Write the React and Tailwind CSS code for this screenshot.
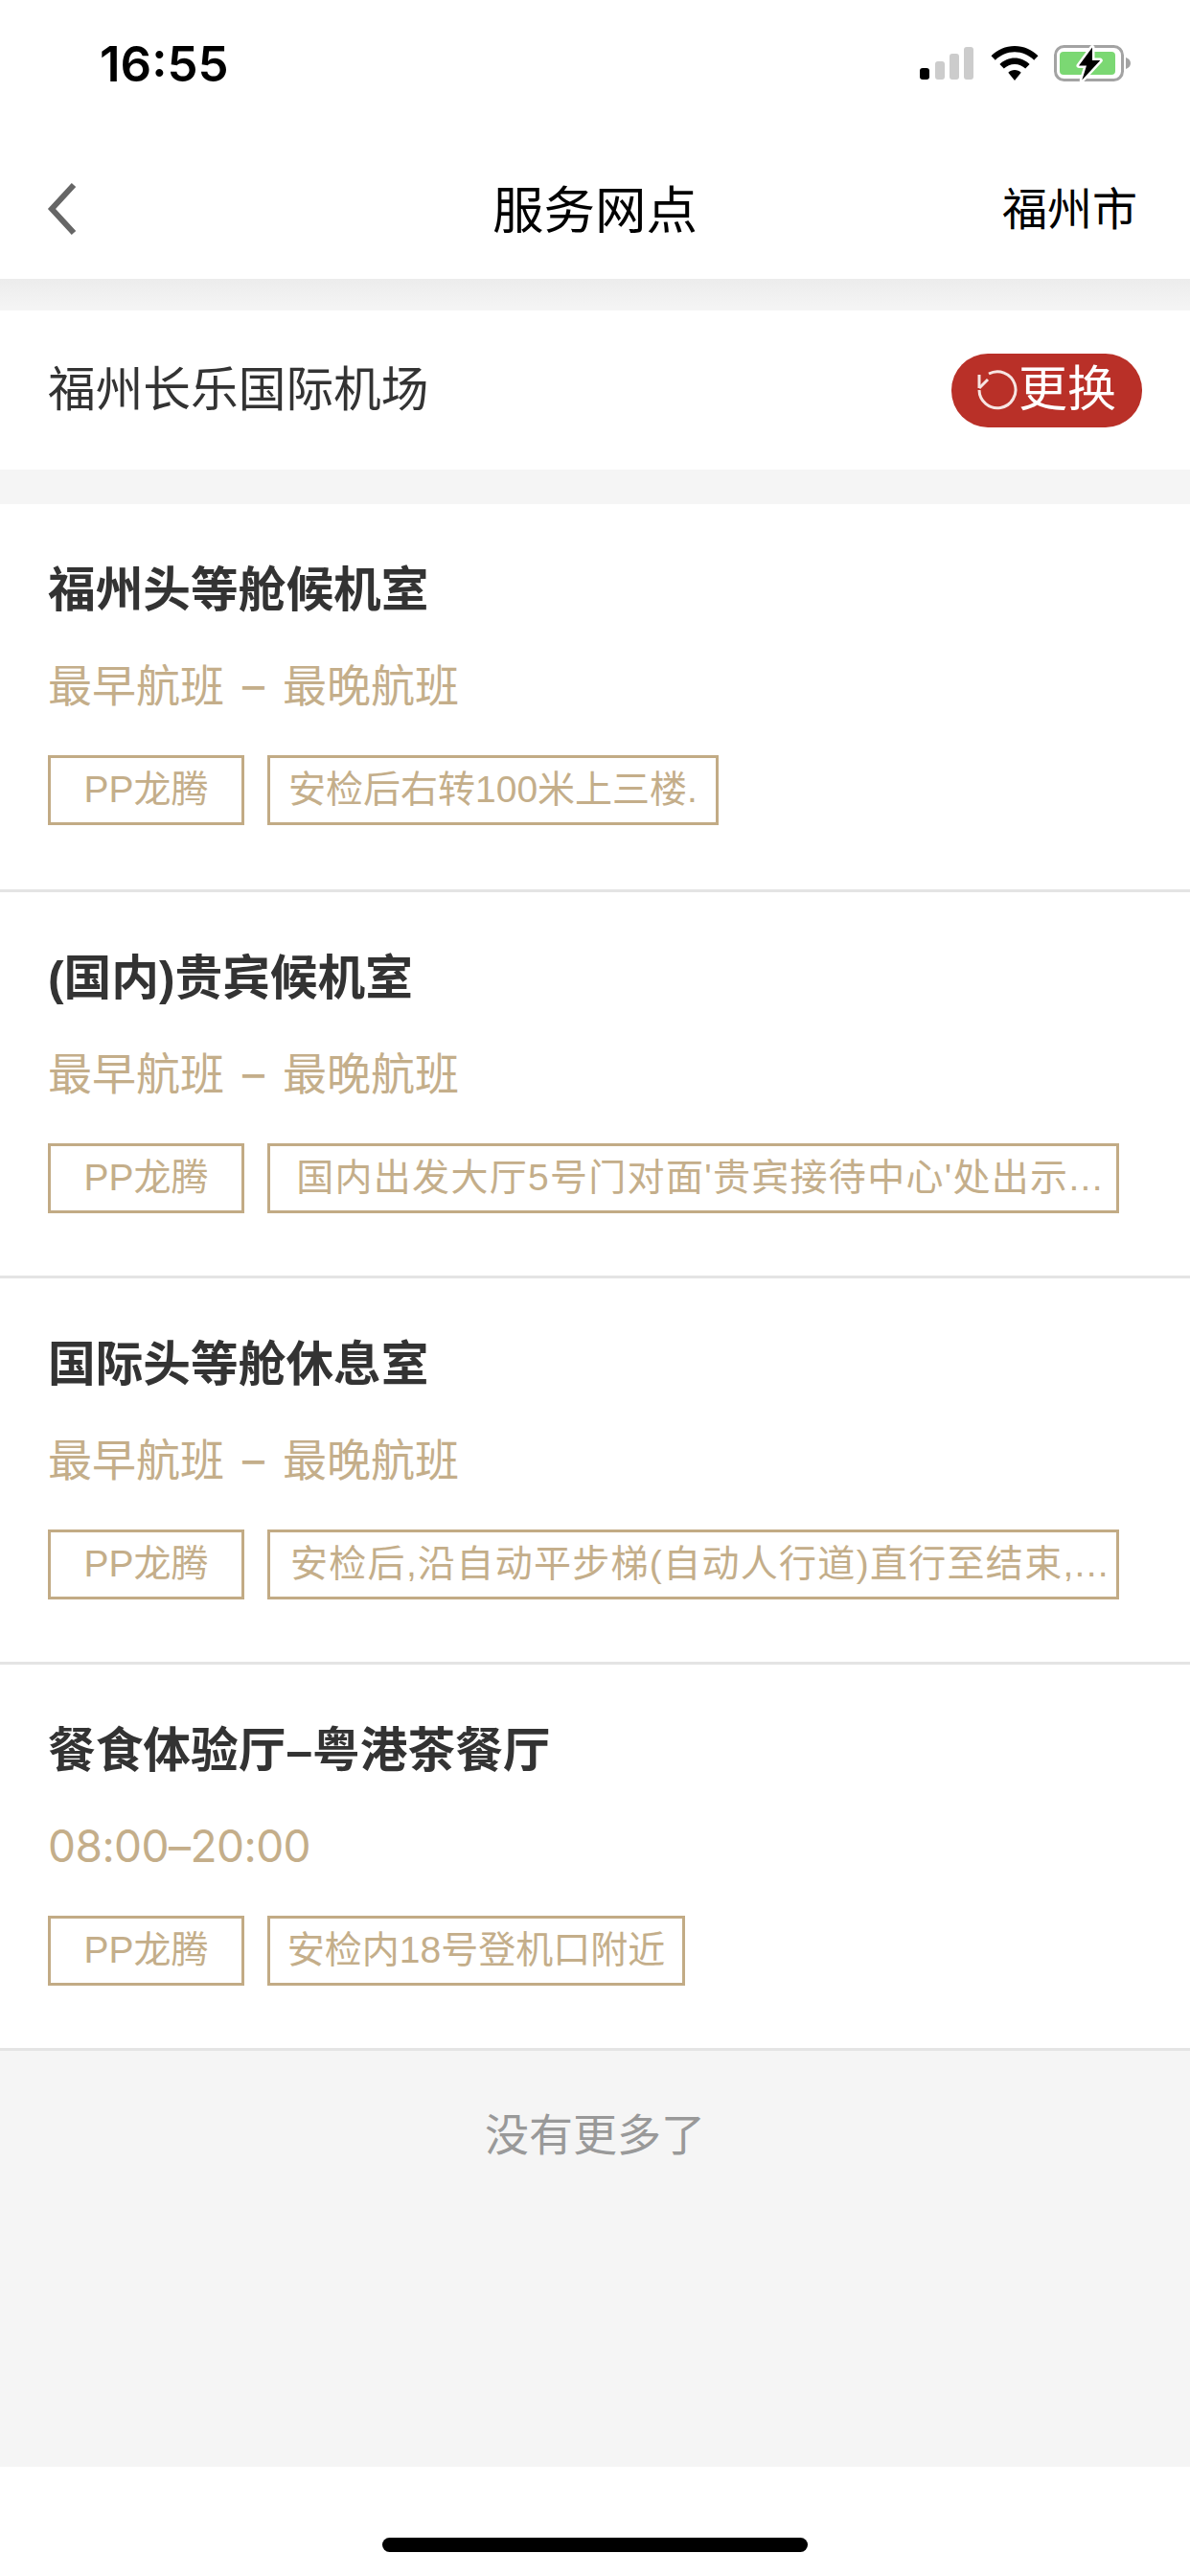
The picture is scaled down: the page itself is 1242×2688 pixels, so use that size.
const FONT = "font-['Liberation_Sans','Noto_Sans_CJK_SC',sans-serif]";

function StatusIcons() {
  return (
    <div className="flex items-center">
      <svg width="56" height="34" viewBox="0 0 56 34" className="mr-[18px]">
        <rect x="0" y="22" width="10" height="12" rx="3" fill="#000" />
        <rect x="16" y="15" width="10" height="19" rx="3" fill="#cccccc" />
        <rect x="31" y="7" width="10" height="27" rx="3" fill="#cccccc" />
        <rect x="46" y="0" width="10" height="34" rx="3" fill="#cccccc" />
      </svg>
      <svg width="50" height="36" viewBox="0 0 50 36" className="mr-[16px]">
        <path d="M25 0C15.500 0 7 3.800 0.500 10.200L4.800 14.800C10.200 9.500 17.300 6.300 25 6.300C32.700 6.300 39.800 9.500 45.200 14.800L49.500 10.200C43 3.800 34.500 0 25 0Z" fill="#000" />
        <path d="M25 12.500C19 12.500 13.600 14.900 9.400 19L13.800 23.600C16.800 20.700 20.700 18.900 25 18.900C29.300 18.900 33.200 20.700 36.200 23.600L40.600 19C36.400 14.900 31 12.500 25 12.500Z" fill="#000" />
        <path d="M25 25C22.400 25 20.100 26 18.300 27.700L25 36L31.700 27.700C29.900 26 27.600 25 25 25Z" fill="#000" />
      </svg>
      <svg width="80" height="38" viewBox="0 0 80 38">
        <rect x="1.500" y="1.500" width="70" height="35" rx="9" fill="none" stroke="#a3a3a3" strokeWidth="3" />
        <path d="M75 13C78 14 80 16 80 19C80 22 78 24 75 25Z" fill="#a3a3a3" />
        <rect x="6" y="7" width="58" height="24" rx="4" fill="#7bd873" />
        <path d="M40 2.500L26 21.500H34L29.300 36.500L48.300 16H40Z" fill="#fff" stroke="#fff" strokeWidth="5" strokeLinejoin="round" />
        <path d="M40 2.500L26 21.500H34L29.300 36.500L48.300 16H40Z" fill="#000" />
      </svg>
    </div>
  );
}

function Card({ title, time, note, tagClass = "", timeClass = "", className = "h-[403px]" }) {
  return (
    <section className={`border-b-[3px] border-[#e4e4e4] bg-white pl-[50px] pr-[74px] pt-[55px] ${className}`}>
      <h2 className="h-[70px] text-[49.7px] font-bold leading-[70px] text-[#333333]">{title}</h2>
      <p className={`mt-[34px] h-[60px] font-['Inter','Noto_Sans_CJK_SC',sans-serif] text-[46px] leading-[60px] text-[#c4ae8a] ${timeClass}`}>{time}</p>
      <div className="mt-[43px] flex gap-[24px] text-[39px] leading-[66px] text-[#c4ae8a]">
        <span className="h-[73px] w-[205px] shrink-0 border-[3px] border-[#c2ab85] text-center">PP龙腾</span>
        <span className={`h-[73px] whitespace-nowrap border-[3px] border-[#c2ab85] text-center ${tagClass}`}>{note}</span>
      </div>
    </section>
  );
}

export default function App() {
  const span = "[word-spacing:6px]";
  return (
    <div className={`flex h-[2688px] w-[1242px] flex-col bg-white ${FONT}`}>
      <header className="h-[291px] shrink-0 bg-white">
        <div className="flex h-[150px] items-start justify-between pl-[104px] pr-[62px] pt-[47px]">
          <span className="font-['Inter'] text-[51px] font-semibold leading-[40px] text-black">16:55</span>
          <StatusIcons />
        </div>
        <div className="relative flex h-[141px] items-center justify-center">
          <svg width="32" height="56" viewBox="0 0 32 56" className="absolute left-[49px] top-[40px]">
            <path d="M28 3L5 28L28 53" fill="none" stroke="#666666" strokeWidth="6" />
          </svg>
          <h1 className="text-[53.5px] font-normal leading-[66px] text-black">服务网点</h1>
          <span className="absolute right-[55px] top-[38px] text-[47px] leading-[62px] text-black">福州市</span>
        </div>
      </header>
      <main className="flex min-h-0 flex-1 flex-col bg-[#f5f5f5]">
        <div className="h-[33px] shrink-0 bg-gradient-to-b from-[#ececec] to-[#f5f5f5]" />
        <div className="flex h-[166px] shrink-0 items-center justify-between bg-white pl-[50px] pr-[50px]">
          <span className="text-[49.7px] leading-[66px] text-[#333333]">福州长乐国际机场</span>
          <button className="flex h-[77px] w-[199px] items-center justify-center gap-[1px] rounded-[38px] bg-[#b93028] pr-[2px] text-[51px] leading-[60px] text-white">
            <svg width="44" height="44" viewBox="0 0 44 44">
              <path d="M14 5A19 19 0 1 1 4 22" fill="none" stroke="#f7e5e3" strokeWidth="3" />
              <path d="M4 6V20" fill="none" stroke="#f7e5e3" strokeWidth="3" />
              <path d="M4 20L13 11" fill="none" stroke="#f7e5e3" strokeWidth="3" />
            </svg>
            <span>更换</span>
          </button>
        </div>
        <div className="h-[36px] shrink-0" />
        <Card className="h-[405px]" timeClass={span} title="福州头等舱候机室" time="最早航班 – 最晚航班" tagClass="w-[471px]" note="安检后右转100米上三楼." />
        <Card timeClass={span} title="(国内)贵宾候机室" time="最早航班 – 最晚航班" tagClass="w-[890px] pl-[14px] tracking-[1.3px]" note="国内出发大厅5号门对面'贵宾接待中心'处出示..." />
        <Card timeClass={span} title="国际头等舱休息室" time="最早航班 – 最晚航班" tagClass="w-[890px] pl-[14px] tracking-[1.3px]" note="安检后,沿自动平步梯(自动人行道)直行至结束,..." />
        <Card timeClass="tracking-[-0.55px]" title="餐食体验厅–粤港茶餐厅" time="08:00–20:00" tagClass="w-[436px]" note="安检内18号登机口附近" />
        <p className="pt-[57px] text-center text-[46px] leading-[62px] text-[#999999]">没有更多了</p>
      </main>
      <footer className="flex h-[114px] shrink-0 justify-center bg-white pt-[74px]">
        <div className="h-[15px] w-[444px] rounded-full bg-black" />
      </footer>
    </div>
  );
}
